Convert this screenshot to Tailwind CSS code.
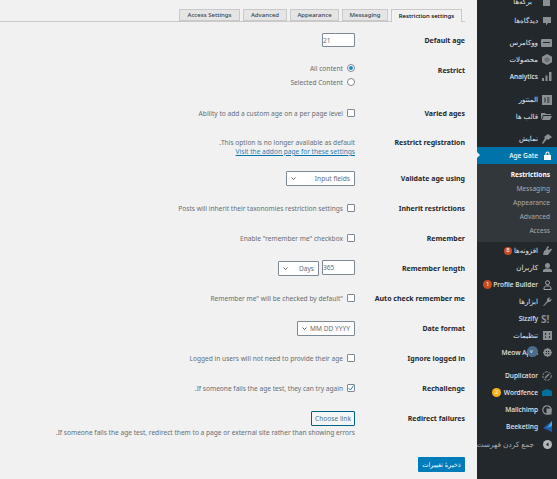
<!DOCTYPE html>
<html lang="fa" dir="rtl">
<head>
  <meta charset="UTF-8">
  <title>Age Gate</title>
  <script src="https://cdn.jsdelivr.net/npm/@tailwindcss/browser@4"></script>
</head>
<body class="bg-[#f1f1f1] h-[479px] w-[557px] overflow-hidden flex font-['Noto_Sans','DejaVu_Sans',sans-serif] text-[6.6px] leading-[9px] text-[#666d73]">

  <!-- admin menu -->
  <nav class="w-[80px] h-[479px] shrink-0 bg-[#23282d] text-[#e6e8ea] overflow-hidden text-[7px]">
    <div class="h-[12px] -mt-[5px] flex items-center gap-[10px] pr-[5px] mb-[5px]">
      <svg class="w-[10px] h-[12px] shrink-0" viewBox="0 0 10 12"><path d="M1 0h7v11H1z" fill="#8b9094"/></svg>
      <span>برگه‌ها</span>
    </div>
    <div class="h-[17px] flex items-center gap-[4px] pr-[5px]">
      <svg class="w-[10px] h-[10px] shrink-0" viewBox="0 0 10 10"><path d="M1 1h8v6H6L4 9.500V7H1z" fill="#8b9094"/></svg>
      <span>دیدگاه‌ها</span>
    </div>
    <div class="h-[17px] mt-[5px] flex items-center gap-[3px] pr-[5px]">
      <svg class="w-[11px] h-[8px] shrink-0" viewBox="0 0 11 8"><rect width="11" height="8" rx="1" fill="#8b9094"/><path d="M2 3h7v1H2z" fill="#23282d"/></svg>
      <span>ووکامرس</span>
    </div>
    <div class="h-[17px] flex items-center gap-[4px] pr-[5px]">
      <svg class="w-[10px] h-[11px] shrink-0" viewBox="0 0 10 11"><path d="M5 0l5 2.700v5.600L5 11 0 8.300V2.700z" fill="#8b9094"/><path d="M5 3l2.500 1.500v2.500L5 8.500 2.500 7V4.500z" fill="#6c7175"/></svg>
      <span>محصولات</span>
    </div>
    <div class="h-[17px] flex items-center gap-[4px] pr-[5px]">
      <svg class="w-[10px] h-[9px] shrink-0" viewBox="0 0 10 9"><path d="M0 6h2v3H0zM3.500 3.500h2V9h-2zM7 0h2.500v9H7z" fill="#8b9094"/></svg>
      <span class="font-medium text-[6.6px]">Analytics</span>
    </div>
    <div class="h-[17px] mt-[6px] flex items-center gap-[4px] pr-[5px]">
      <svg class="w-[10px] h-[10px] shrink-0" viewBox="0 0 10 10"><rect width="10" height="10" fill="#8b9094"/><path d="M2.500 2.500h1v5h-1zM5 2.500h2.500v1H5zM5 4.500h2.500v1H5zM5 6.500h2.500v1H5z" fill="#23282d"/></svg>
      <span>المنتور</span>
    </div>
    <div class="h-[17px] flex items-center gap-[3px] pr-[5px]">
      <svg class="w-[11px] h-[7px] shrink-0" viewBox="0 0 11 7"><path d="M0 0h4l1 1h5v1H2L0 7zM2.500 3H11L9 7H1z" fill="#8b9094"/></svg>
      <span>قالب ها</span>
    </div>
    <div class="h-[17px] mt-[5px] flex items-center gap-[4px] pr-[5px]">
      <svg class="w-[10px] h-[10px] shrink-0" viewBox="0 0 10 10"><path d="M6 0l4 3-4 3-1-1-4 5-1-1 3-5-1-1z" fill="#8b9094"/></svg>
      <span>نمایش</span>
    </div>
    <div class="h-[17px] flex items-center gap-[6px] pr-[6px] bg-[#0073aa] text-white relative">
      <svg class="w-[7px] h-[9px] shrink-0" viewBox="0 0 7 9"><path d="M1.500 4V2.500a2 2 0 0 1 4 0V4H7v5H0V4zM2.500 4h2V2.500a1 1 0 0 0-2 0z" fill="#fff" fill-rule="evenodd"/></svg>
      <span class="font-medium text-[6.6px]">Age Gate</span>
      <span class="absolute left-0 top-[5px] border-y-[3.500px] border-y-transparent border-l-[3px] border-l-[#f1f1f1]"></span>
    </div>
    <div class="bg-[#32373c] h-[78px] pt-[3px] pr-[7px] text-[#a8acaf] text-[6.6px] flex flex-col">
      <span class="h-[14px] flex items-center font-bold text-white">Restrictions</span>
      <span class="h-[14px] flex items-center">Messaging</span>
      <span class="h-[14px] flex items-center">Appearance</span>
      <span class="h-[14px] flex items-center">Advanced</span>
      <span class="h-[14px] flex items-center">Access</span>
    </div>
    <div class="h-[17px] flex items-center gap-[5px] pr-[5px]">
      <svg class="w-[9px] h-[9px] shrink-0" viewBox="0 0 9 9"><path d="M5 0l1 1-1.500 2 1.500 1 2-1.500 1 1L6 7.500 5 9 0 9l1-4 1.500-1L4 1z" fill="#8b9094"/></svg>
      <span>افزونه‌ها</span>
      <span class="w-[8px] h-[8px] -mr-[3px] rounded-full bg-[#ca4a1f] text-white text-[6px] flex items-center justify-center">8</span>
    </div>
    <div class="h-[17px] flex items-center gap-[5px] pr-[5px]">
      <svg class="w-[9px] h-[9px] shrink-0" viewBox="0 0 9 9"><circle cx="4.500" cy="2.500" r="2.500" fill="#8b9094"/><path d="M0 9V7l2.500-1.500h4L9 7v2z" fill="#8b9094"/></svg>
      <span>کاربران</span>
    </div>
    <div class="h-[17px] flex items-center gap-[5px] pr-[5px]">
      <svg class="w-[9px] h-[10px] shrink-0" viewBox="0 0 9 10"><circle cx="4.500" cy="2.700" r="2" fill="none" stroke="#b4b7ba" stroke-width="0.900"/><path d="M1 9.500V7.500L2.700 6h3.600L8 7.500v2z" fill="none" stroke="#b4b7ba" stroke-width="0.900"/></svg>
      <span class="font-medium text-[6.6px] whitespace-nowrap">Profile Builder</span>
      <span class="w-[9px] h-[9px] -mr-[4px] rounded-full bg-[#ca4a1f] text-white text-[6px] flex items-center justify-center shrink-0">1</span>
    </div>
    <div class="h-[17px] flex items-center gap-[5px] pr-[5px]">
      <svg class="w-[9px] h-[9px] shrink-0" viewBox="0 0 9 9"><path d="M0 9l4-5c-.5-2 1-4 3.500-3.500L6 2l1 1 1.500-1.500C9 4 7 5.500 5 5L1 9z" fill="#8b9094"/></svg>
      <span>ابزارها</span>
    </div>
    <div class="h-[17px] flex items-center gap-[3px] pr-[5px]">
      <span class="w-[11px] text-[10px] leading-[10px] font-bold text-[#8b9094] shrink-0" dir="ltr">S!</span>
      <span class="font-medium text-[6.6px]">Sizzify</span>
    </div>
    <div class="h-[17px] flex items-center gap-[5px] pr-[5px]">
      <svg class="w-[9px] h-[9px] shrink-0" viewBox="0 0 9 9"><rect width="9" height="9" fill="#8b9094"/><path d="M2 2h1v2H2zM2 5.500h1V7H2zM6 2h1v1.500H6zM6 5h1v2H6z" fill="#23282d"/></svg>
      <span>تنظیمات</span>
    </div>
    <div class="h-[17px] flex items-center gap-[5px] pr-[5px] relative">
      <svg class="w-[9px] h-[9px] shrink-0" viewBox="0 0 9 9"><circle cx="4.500" cy="4.500" r="3" fill="none" stroke="#8b9094" stroke-width="2"/><path d="M4 0h1v9H4zM0 4h9v1H0z" fill="#8b9094"/></svg>
      <span class="font-medium text-[6.6px] whitespace-nowrap">Meow Apps</span>
      <span class="absolute left-[50px] top-[2px] w-[11px] h-[11px] rounded-full bg-[#4a6b8c]"></span>
      <span class="absolute left-[53px] top-[5px] text-[5px] leading-[5px] text-white">v</span>
    </div>
    <div class="h-[17px] mt-[6px] flex items-center gap-[4px] pr-[5px]">
      <svg class="w-[10px] h-[10px] shrink-0" viewBox="0 0 10 10"><circle cx="5" cy="5" r="4.200" fill="none" stroke="#8b9094" stroke-width="1" stroke-dasharray="2.500 1"/><path d="M3 7l4-4" stroke="#8b9094" stroke-width="1.500"/></svg>
      <span class="font-medium text-[6.6px]">Duplicator</span>
    </div>
    <div class="h-[17px] flex items-center gap-[4px] pr-[5px]">
      <svg class="w-[10px] h-[7px] shrink-0" viewBox="0 0 10 7"><path d="M0 2l5-2 5 2v5H0z" fill="#00709e"/></svg>
      <span class="font-medium text-[6.6px]">Wordfence</span>
      <span class="w-[9px] h-[9px] -mr-[1px] rounded-full bg-[#fcb214] text-white text-[6px] flex items-center justify-center">2</span>
    </div>
    <div class="h-[17px] flex items-center gap-[4px] pr-[5px]">
      <svg class="w-[10px] h-[10px] shrink-0" viewBox="0 0 10 10"><circle cx="5" cy="5" r="4.200" fill="none" stroke="#8b9094" stroke-width="1.200"/><rect x="4.500" y="3.500" width="5" height="6" fill="#8b9094"/></svg>
      <span class="font-medium text-[6.6px]">Mailchimp</span>
    </div>
    <div class="h-[17px] flex items-center gap-[5px] pr-[5px]">
      <svg class="w-[9px] h-[11px] shrink-0" viewBox="0 0 9 11"><path d="M9 0v11L0 7z" fill="#1a5fb4"/><path d="M9 0v5L4 7z" fill="#4fa3d8"/></svg>
      <span class="font-medium text-[6.6px]">Beeketing</span>
    </div>
    <div class="h-[17px] mt-[1px] flex items-center gap-[9px] pr-[5px] text-[#a8acaf]">
      <svg class="w-[9px] h-[9px] shrink-0" viewBox="0 0 9 9"><circle cx="4.500" cy="4.500" r="4.500" fill="#b4b7ba"/><path d="M5.500 2.500v4l-2.500-2z" fill="#23282d"/></svg>
      <span class="whitespace-nowrap text-[7.400px]">جمع کردن فهرست</span>
    </div>
  </nav>

  <main class="flex-1 min-w-0 pr-[12px]">
    <!-- tabs -->
    <div class="h-[22px] pt-[9px] flex gap-[3px] border-b border-[#c9c9c9] pr-[3px] text-[6px] font-medium text-[#3c434a]">
      <a class="w-[71px] h-[13px] flex items-center justify-center border border-b-0 border-[#c9c9c9] bg-[#f1f1f1] text-black">Restriction settings</a>
      <a class="w-[46px] h-[12px] flex items-center justify-center border border-[#c9c9c9] bg-[#e5e5e5]">Messaging</a>
      <a class="w-[49px] h-[12px] flex items-center justify-center border border-[#c9c9c9] bg-[#e5e5e5]">Appearance</a>
      <a class="w-[44px] h-[12px] flex items-center justify-center border border-[#c9c9c9] bg-[#e5e5e5]">Advanced</a>
      <a class="w-[61px] h-[12px] flex items-center justify-center border border-[#c9c9c9] bg-[#e5e5e5]">Access Settings</a>
    </div>

    <div class="h-[36px] flex items-center">
      <label class="w-[110px] font-bold text-[7px] text-[#23282d]">Default age</label>
      <input dir="ltr" value="21" class="w-[33px] h-[14px] bg-white border border-[#7e8993] rounded-[1px] text-[6.6px] text-[#666d73] outline-none">
    </div>

    <div class="h-[40px] pt-[3px] flex items-start">
      <label class="w-[110px] font-bold text-[7px] text-[#23282d] pt-[5px]">Restrict</label>
      <div class="flex flex-col">
        <div class="h-[14px] flex items-center gap-[4px]">
          <span class="w-[8px] h-[8px] rounded-full border border-[#7e8993] bg-white flex items-center justify-center"><span class="w-[4px] h-[4px] rounded-full bg-[#1e8cbe]"></span></span>
          <span>All content</span>
        </div>
        <div class="h-[14px] flex items-center gap-[4px]">
          <span class="w-[8px] h-[8px] rounded-full border border-[#7e8993] bg-white"></span>
          <span>Selected Content</span>
        </div>
      </div>
    </div>

    <div class="h-[30px] flex items-center">
      <label class="w-[110px] font-bold text-[7px] text-[#23282d]">Varied ages</label>
      <span class="w-[8px] h-[8px] border border-[#7e8993] rounded-[1px] bg-white ml-[4px]"></span>
      <span>Ability to add a custom age on a per page level</span>
    </div>

    <div class="h-[35px] pt-[10px] flex items-start">
      <label class="w-[110px] font-bold text-[7px] text-[#23282d]">Restrict registration</label>
      <div>
        <p>This option is no longer available as default.</p>
        <a class="text-[#2b7fae] underline decoration-[#0073aa]">Visit the addon page for these settings</a>
      </div>
    </div>

    <div class="h-[30px] flex items-center">
      <label class="w-[110px] font-bold text-[7px] text-[#23282d]">Validate age using</label>
      <div class="w-[69px] h-[15px] bg-white border border-[#7e8993] rounded-[1px] flex items-center justify-between px-[4px]">
        <span>Input fields</span>
        <svg class="w-[5px] h-[3px]" viewBox="0 0 5 3"><path d="M.5.500l2 2 2-2" fill="none" stroke="#3c434a" stroke-width="0.800"/></svg>
      </div>
    </div>

    <div class="h-[30px] flex items-center">
      <label class="w-[110px] font-bold text-[7px] text-[#23282d]">Inherit restrictions</label>
      <span class="w-[8px] h-[8px] border border-[#7e8993] rounded-[1px] bg-white ml-[4px]"></span>
      <span>Posts will inherit their taxonomies restriction settings</span>
    </div>

    <div class="h-[30px] flex items-center">
      <label class="w-[110px] font-bold text-[7px] text-[#23282d]">Remember</label>
      <span class="w-[8px] h-[8px] border border-[#7e8993] rounded-[1px] bg-white ml-[4px]"></span>
      <span>Enable "remember me" checkbox</span>
    </div>

    <div class="h-[30px] flex items-center">
      <label class="w-[110px] font-bold text-[7px] text-[#23282d]">Remember length</label>
      <input dir="ltr" value="365" class="w-[33px] h-[15px] bg-white border border-[#7e8993] rounded-[1px] text-[6.6px] text-[#666d73] outline-none ml-[3px] -mt-[1px]">
      <div class="w-[41px] h-[15px] bg-white border border-[#7e8993] rounded-[1px] flex items-center justify-between px-[4px]">
        <span>Days</span>
        <svg class="w-[5px] h-[3px]" viewBox="0 0 5 3"><path d="M.5.500l2 2 2-2" fill="none" stroke="#3c434a" stroke-width="0.800"/></svg>
      </div>
    </div>

    <div class="h-[30px] flex items-center">
      <label class="w-[110px] font-bold text-[7px] text-[#23282d]">Auto check remember me</label>
      <span class="w-[8px] h-[8px] border border-[#7e8993] rounded-[1px] bg-white ml-[4px]"></span>
      <span>"Remember me" will be checked by default</span>
    </div>

    <div class="h-[30px] flex items-center">
      <label class="w-[110px] font-bold text-[7px] text-[#23282d]">Date format</label>
      <div class="w-[58px] h-[15px] bg-white border border-[#7e8993] rounded-[1px] flex items-center justify-between px-[4px]">
        <span>MM DD YYYY</span>
        <svg class="w-[5px] h-[3px]" viewBox="0 0 5 3"><path d="M.5.500l2 2 2-2" fill="none" stroke="#3c434a" stroke-width="0.800"/></svg>
      </div>
    </div>

    <div class="h-[30px] flex items-center">
      <label class="w-[110px] font-bold text-[7px] text-[#23282d]">Ignore logged in</label>
      <span class="w-[8px] h-[8px] border border-[#7e8993] rounded-[1px] bg-white ml-[4px]"></span>
      <span>Logged in users will not need to provide their age</span>
    </div>

    <div class="h-[30px] flex items-center">
      <label class="w-[110px] font-bold text-[7px] text-[#23282d]">Rechallenge</label>
      <span class="w-[8px] h-[8px] border border-[#7e8993] rounded-[1px] bg-white ml-[4px] flex items-center justify-center">
        <svg class="w-[6px] h-[6px]" viewBox="0 0 6 6"><path d="M.5 3l2 2L5.500.5" fill="none" stroke="#1e8cbe" stroke-width="1"/></svg>
      </span>
      <span>If someone fails the age test, they can try again.</span>
    </div>

    <div class="h-[30px] flex items-center">
      <label class="w-[110px] font-bold text-[7px] text-[#23282d]">Redirect failures</label>
      <button class="w-[44px] h-[15px] bg-[#f3f5f6] border border-[#016087] rounded-[1px] text-[#4f7486]">Choose link</button>
    </div>
    <p class="mr-[110px] -mt-[5px] whitespace-nowrap">If someone fails the age test, redirect them to a page or external site rather than showing errors.</p>

    <button class="mt-[20px] w-[47px] h-[15px] bg-[#007cba] rounded-[1px] text-white">ذخیرهٔ تغییرات</button>
  </main>
</body>
</html>
